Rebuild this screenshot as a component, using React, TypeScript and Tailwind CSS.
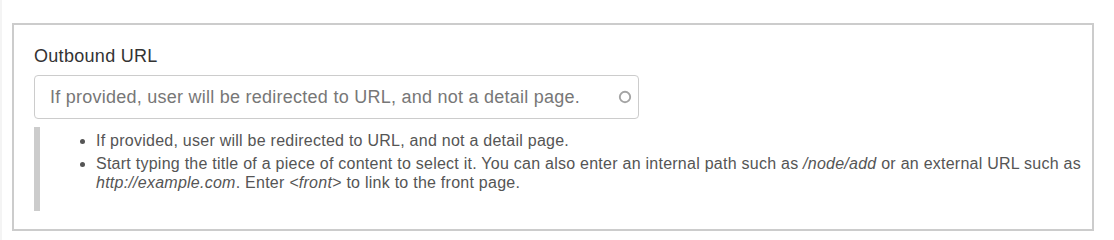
import React from "react";

function Throbber() {
  return (
    <svg width="14" height="14" viewBox="0 0 14 14" className="shrink-0">
      <circle cx="7" cy="7" r="5.2" fill="none" stroke="#a4a4a4" strokeWidth="1.9" />
    </svg>
  );
}

export default function App() {
  return (
    <div className="h-[240px] w-[1114px] border-l-2 border-[#f4f4f4] bg-white pl-[10px] pt-[23px] font-['Liberation_Sans',Arial,sans-serif]">
      <div className="h-[208px] w-[1082px] border-2 border-[#cccccc] pl-[20px] pr-[8px] pt-[21px]">
        <label className="block text-[18px] leading-[20px] tracking-[0.3px] text-[#333333]">
          Outbound URL
        </label>
        <div className="mt-[9px] flex h-[44px] w-[605px] items-center justify-between rounded-[4px] border border-[#cccccc] pl-[15px] pr-[6px]">
          <span className="text-[18px] tracking-[0.25px] text-[#777777]">
            If provided, user will be redirected to URL, and not a detail page.
          </span>
          <Throbber />
        </div>
        <div className="mt-[8px] border-l-[6px] border-[#cccccc] pb-[19px] pl-[56px] pt-[4px] text-[16px] leading-[19px] tracking-[0.25px] text-[#555555]">
          <ul className="list-disc space-y-[4px]">
            <li>If provided, user will be redirected to URL, and not a detail page.</li>
            <li>
              Start typing the title of a piece of content to select it. You can also enter an internal
              path such as <em>/node/add</em> or an external URL such as <em>http://example.com</em>.
              Enter <em>&lt;front&gt;</em> to link to the front page.
            </li>
          </ul>
        </div>
      </div>
    </div>
  );
}
